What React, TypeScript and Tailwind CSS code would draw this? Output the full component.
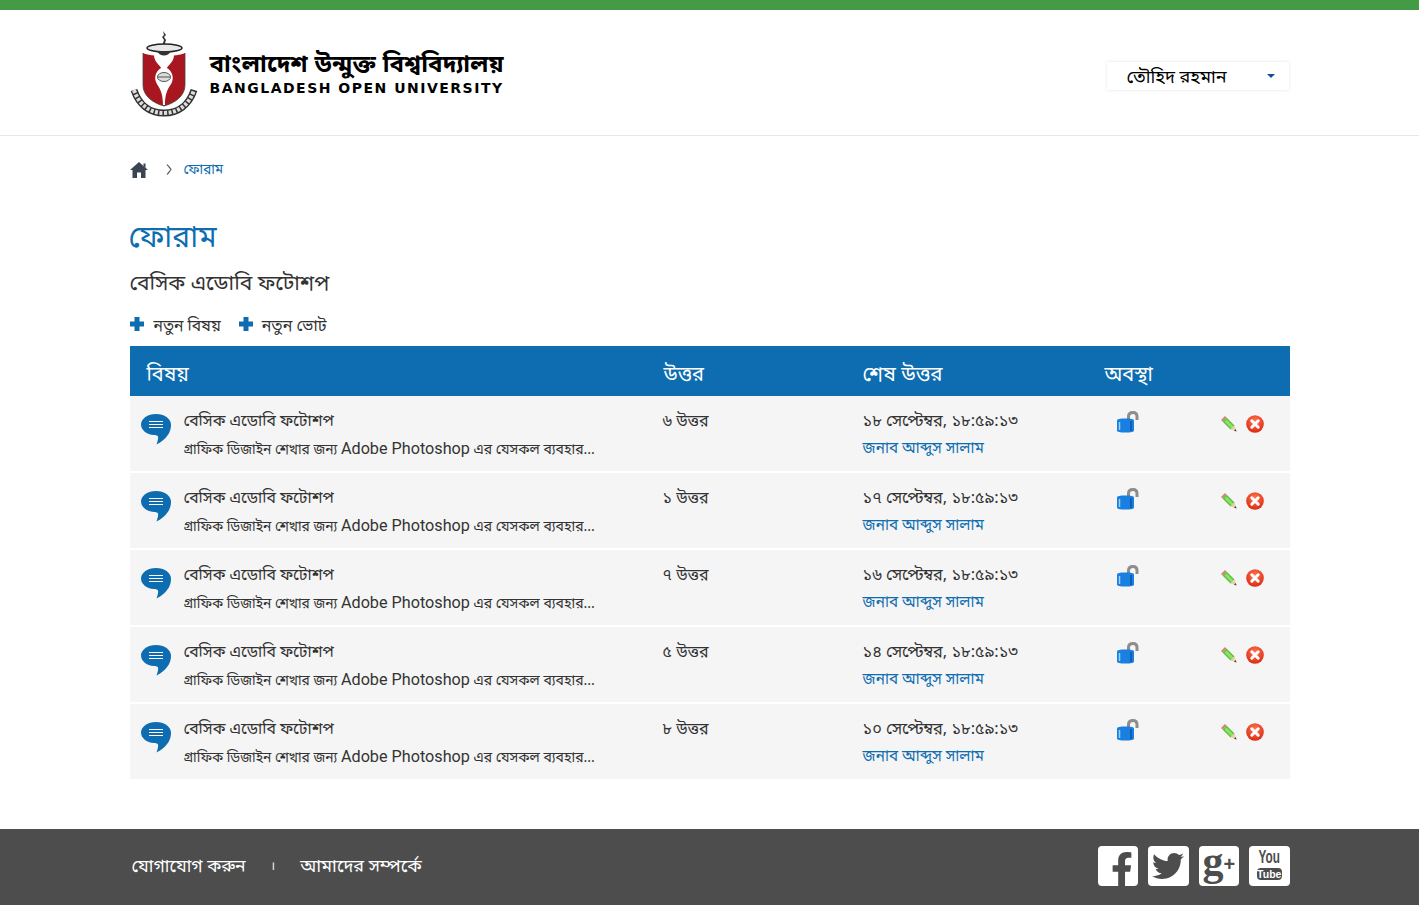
import React from "react";
import { FaFacebookF, FaTwitter } from "react-icons/fa";

const topics = [
	{ replies: "৬ উত্তর", date: "১৮ সেপ্টেম্বর, ১৮:৫৯:১৩" },
	{ replies: "১ উত্তর", date: "১৭ সেপ্টেম্বর, ১৮:৫৯:১৩" },
	{ replies: "৭ উত্তর", date: "১৬ সেপ্টেম্বর, ১৮:৫৯:১৩" },
	{ replies: "৫ উত্তর", date: "১৪ সেপ্টেম্বর, ১৮:৫৯:১৩" },
	{ replies: "৮ উত্তর", date: "১০ সেপ্টেম্বর, ১৮:৫৯:১৩" },
];

const Seal = () => (
	<svg width="68" height="88" viewBox="0 0 68 88" className="shrink-0">
		<path d="M33 1l3 4-2 2 2 3-1 3v4h-2v-4l1-3-2-3 2-2z" fill="#333" />
		<path d="M13 23C20 27 48 27 55 23L55 55C55 66 45 73 34 76 23 73 13 66 13 55Z" fill="#a8171f" />
		<path d="M24 25L44 25C44 32 38 35 37 38 42 41 44 47 42 52 40 57 35 60 35 75L33 75C33 60 28 57 26 52 24 47 26 41 31 38 30 35 24 32 24 25Z" fill="#fff" />
		<ellipse cx="34" cy="47" rx="6.500" ry="4.500" fill="#ddd" stroke="#555" strokeWidth="1" />
		<path d="M28 47h12" stroke="#555" strokeWidth="1" />
		<ellipse cx="34.500" cy="18" rx="17.500" ry="4" fill="#e8e8e8" stroke="#222" strokeWidth="1.500" />
		<path d="M27 21c3 6 11 6 14 0z" fill="#333" />
		<path d="M13 23v32c0 11 10 18 21 21 11-3 21-10 21-21V23" fill="none" stroke="#444" strokeWidth=".8" />
		<path d="M4 60C9 75 20 83 34 83 48 83 59 75 64 60" fill="none" stroke="#333" strokeWidth="7" />
		<path d="M4 60C9 75 20 83 34 83 48 83 59 75 64 60" fill="none" stroke="#ddd" strokeWidth="4" strokeDasharray="3 1.500" />
	</svg>
);

const HomeIcon = () => (
	<svg width="18" height="16" viewBox="0 0 18 16" className="shrink-0">
		<path d="M9 0L18 8H15.500V16H11V10.500H7V16H2.500V8H0Z" fill="#3b4452" />
		<path d="M13.500 1.500h2v4.500l-2-1.800z" fill="#3b4452" />
	</svg>
);

const PlusIcon = () => (
	<svg width="14" height="14" viewBox="0 0 14 14" className="shrink-0">
		<path d="M4.500 0h5v4.500H14v5H9.500V14h-5V9.500H0v-5h4.500z" fill="#0e6db0" />
	</svg>
);

const Bubble = () => (
	<svg width="30" height="31" viewBox="0 0 30 31" className="shrink-0">
		<path d="M15 0C6.700 0 0 4.700 0 10.500 0 16 5.500 20.500 13 21c2 0 3.500 .5 4 1.500 .6 1.500-.5 5-1.500 8 4.500-2 11-7.500 13-12.500 1-2 1.500-5 1.500-7.500C30 4.700 23.300 0 15 0z" fill="#0e6db0" />
		<path d="M8 7.500h14M8 10.500h14M8 13.500h14" stroke="#fff" strokeWidth="1" />
	</svg>
);

const Lock = () => (
	<svg width="22" height="22" viewBox="0 0 22 22">
		<path d="M11.500 12V5.500C11.500 3 13 1.500 16 1.500S20 3 20 5.500V9" fill="none" stroke="#8d8d8d" strokeWidth="3" />
		<path d="M0 9.500C0 8 3 7.500 8.500 7.500S17 8 17 9.500V19.500C17 21 14 21.500 8.500 21.500S0 21 0 19.500z" fill="#1a7fe0" />
		<path d="M2.500 11v8" stroke="#9ad0fa" strokeWidth="1.500" />
		<path d="M14 10v10" stroke="#0f5fb5" strokeWidth="2" />
	</svg>
);

const Pencil = () => (
	<svg width="16" height="16" viewBox="0 0 16 16">
		<path d="M4 0L0 4 1.500 5.500 5.500 1.500z" fill="#e47a7a" />
		<path d="M5.500 1.500L1.500 5.500 9.500 13.500 13.500 9.500z" fill="#5cc23e" />
		<path d="M5.500 3.500L3.500 5.500 10.500 12.500 12.500 10.500z" fill="#8fe06a" />
		<path d="M9.500 13.500L13.500 9.500 15.500 15.500z" fill="#e8d3a6" />
		<path d="M13 14.800L15.500 15.500 14.800 13z" fill="#444" />
	</svg>
);

const CloseIcon = () => (
	<svg width="18" height="18" viewBox="0 0 18 18">
		<defs>
			<radialGradient id="closeFill" cx="50%" cy="35%" r="70%">
				<stop offset="0%" stopColor="#ff7a50" />
				<stop offset="100%" stopColor="#d9230f" />
			</radialGradient>
		</defs>
		<circle cx="9" cy="9" r="8.800" fill="url(#closeFill)" />
		<path d="M5.800 5.800l6.400 6.400M12.200 5.800l-6.400 6.400" stroke="#fff" strokeWidth="3" strokeLinecap="round" />
	</svg>
);

const Social = ({ children }: { children: React.ReactNode }) => (
	<a className="w-[40.5px] h-[40px] rounded-[4px] bg-white flex items-center justify-center text-[#4d4d4d]">{children}</a>
);

const App = () => {
	return (
		<div className="min-h-[905px] bg-white text-[#333] font-['Noto_Sans','Noto_Sans_Bengali',sans-serif]">
			<div className="h-[10px] bg-[#439b46]" />

			<header className="h-[126px] border-b border-[#e8e8e8]">
				<div className="w-[1160px] mx-auto h-[125px] flex items-center justify-between">
					<div className="flex items-center gap-[12px] mt-[2px]">
						<Seal />
						<div className="text-black mt-[-3px]">
							<div className="text-[24px] leading-[28px] font-bold tracking-[0.3px]">বাংলাদেশ উন্মুক্ত বিশ্ববিদ্যালয়</div>
							<div className="font-['DejaVu_Sans',sans-serif] text-[14px] leading-[16px] font-bold tracking-[1.5px] mt-[3px] whitespace-nowrap">BANGLADESH OPEN UNIVERSITY</div>
						</div>
					</div>
					<div className="w-[182px] h-[28px] mt-[7px] mr-[1px] bg-white shadow-[0_0_3px_rgba(0,0,0,0.12)] flex items-center justify-between pl-[20px] pr-[14px] text-[18px] text-black">
						<span>তৌহিদ রহমান</span>
						<span className="w-0 h-0 border-x-[4px] border-x-transparent border-t-[4px] border-t-[#0e4f9a]" />
					</div>
				</div>
			</header>

			<main className="w-[1160px] mx-auto">
				<nav className="h-[67px] flex items-center text-[13.5px]">
					<HomeIcon />
					<svg width="6" height="11" viewBox="0 0 6 11" className="ml-[18px] shrink-0">
						<path d="M1 .5c1.500 2 3 3.500 4 5-1 1.500-2.500 3-4 5" fill="none" stroke="#555" strokeWidth="1.200" />
					</svg>
					<a className="ml-[12px] text-[#0e6db0]">ফোরাম</a>
				</nav>

				<h1 className="text-[#0e6db0] text-[30px] leading-[40px] mt-[13px] ml-[-1px]">ফোরাম</h1>
				<h2 className="text-[21px] leading-[30px] mt-[11px]">বেসিক এডোবি ফটোশপ</h2>

				<div className="flex items-center gap-[18px] mt-[13px] h-[28px] text-[16px]">
					<a className="flex items-center gap-[10px]"><PlusIcon /><span className="text-[15.7px] leading-[28px] pt-[1px]">নতুন বিষয়</span></a>
					<a className="flex items-center gap-[9px]"><PlusIcon /><span className="leading-[28px] pt-[1px]">নতুন ভোট</span></a>
				</div>

				<div className="mt-[8px]">
					<div className="grid grid-cols-[533px_200px_241px_186px] h-[50px] pt-[5px] items-center bg-[#0e6db0] text-white text-[20px]">
						<div className="pl-[17px]">বিষয়</div>
						<div className="pl-[1px]">উত্তর</div>
						<div className="text-[20.5px]">শেষ উত্তর</div>
						<div className="pl-[1px]">অবস্থা</div>
					</div>

					{topics.map((topic, index) => (
						<div key={index} className="grid grid-cols-[533px_200px_241px_186px] h-[75px] mb-[2px] last:mb-0 bg-[#f5f5f5]">
							<div className="flex pl-[11px] pt-[18px] gap-[13px]">
								<Bubble />
								<div className="mt-[-7px]">
									<div className="text-[15.8px] leading-[26px]">বেসিক এডোবি ফটোশপ</div>
									<div className="text-[14px] leading-[22px] mt-[5px] whitespace-nowrap">
										<span className="text-[13.8px]">গ্রাফিক ডিজাইন শেখার জন্য</span>{" "}
										<span className="font-['Roboto',sans-serif] text-[16.2px]">Adobe Photoshop</span> এর যেসকল ব্যবহার...
									</div>
								</div>
							</div>
							<div className="pt-[11px] text-[16px] leading-[26px]">{topic.replies}</div>
							<div className="pt-[11px]">
								<div className="text-[16.3px] leading-[26px]">{topic.date}</div>
								<a className="block text-[#0e6db0] text-[15.3px] leading-[26px] mt-[1px]">জনাব আব্দুস সালাম</a>
							</div>
							<div className="flex pt-[15px]">
								<div className="ml-[13px]"><Lock /></div>
								<div className="ml-[82px] mt-[5px] flex gap-[9px]">
									<Pencil />
									<div className="mt-[-1px]"><CloseIcon /></div>
								</div>
							</div>
						</div>
					))}
				</div>
			</main>

			<footer className="mt-[50px] h-[76px] bg-[#4d4d4d] text-white">
				<div className="w-[1160px] mx-auto h-full flex items-center justify-between">
					<div className="flex items-center text-[17.5px] pl-[2px] mb-[3px]">
						<a>যোগাযোগ করুন</a>
						<span className="ml-[25px] mr-[25px] text-[12px] text-white">।</span>
						<a className="text-[18px]">আমাদের সম্পর্কে</a>
					</div>
					<div className="flex gap-[10px] mt-[-2px]">
						<Social><FaFacebookF className="w-[26px] h-[35px] mt-[7px] ml-[9px]" /></Social>
						<Social><FaTwitter className="w-[32px] h-[32px]" /></Social>
						<Social>
							<span className="font-['Liberation_Serif',serif] font-bold text-[42px] leading-[38px] mt-[-10px]">g</span>
							<span className="font-['Liberation_Sans',sans-serif] font-bold text-[20px] leading-none mt-[-4px]">+</span>
						</Social>
						<Social>
							<div className="flex flex-col items-center font-['Liberation_Sans',sans-serif] font-bold mt-[-3px]">
								<span className="text-[19px] leading-[16px] scale-x-[0.62]">You</span>
								<span className="mt-[3px] w-[25px] h-[12px] rounded-[4px] bg-[#4d4d4d] text-white text-[10.500px] leading-[12px] text-center">Tube</span>
							</div>
						</Social>
					</div>
				</div>
			</footer>
		</div>
	);
};

export default App;
